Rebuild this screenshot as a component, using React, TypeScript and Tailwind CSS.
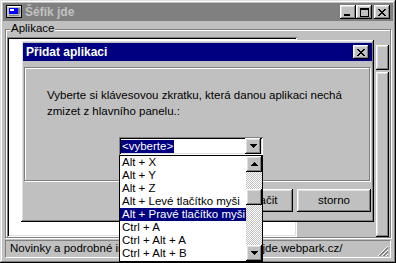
const raised =
  'bg-[#c0c0c0] shadow-[inset_-1px_-1px_0_#000,inset_1px_1px_0_#fff,inset_-2px_-2px_0_#808080,inset_2px_2px_0_#dfdfdf]'
const sunken =
  'shadow-[inset_1px_1px_0_#808080,inset_-1px_-1px_0_#fff,inset_2px_2px_0_#000,inset_-2px_-2px_0_#dfdfdf]'
const checker =
  'bg-[image:repeating-conic-gradient(#fff_0%_25%,#c0c0c0_0%_50%)] bg-[length:2px_2px]'

function Down() {
  return (
    <svg width="7" height="4" viewBox="0 0 7 4">
      <path d="M0 0h7v1H0zM1 1h5v1H1zM2 2h3v1H2zM3 3h1v1H3z" fill="#000" />
    </svg>
  )
}

function Up() {
  return (
    <svg width="7" height="4" viewBox="0 0 7 4">
      <path d="M3 0h1v1H3zM2 1h3v1H2zM1 2h5v1H1zM0 3h7v1H0z" fill="#000" />
    </svg>
  )
}

function CloseGlyph() {
  return (
    <svg width="8" height="7" viewBox="0 0 8 7">
      <path
        d="M0 0h2v1H0zM6 0h2v1H6zM1 1h2v1H1zM5 1h2v1H5zM2 2h4v1H2zM3 3h2v1H3zM2 4h4v1H2zM1 5h2v1H1zM5 5h2v1H5zM0 6h2v1H0zM6 6h2v1H6z"
        fill="#000"
      />
    </svg>
  )
}

function AppIcon() {
  return (
    <svg width="16" height="14" viewBox="0 0 16 14">
      <rect x="0.5" y="0.5" width="15" height="12" fill="#c0c0c0" stroke="#000" />
      <rect x="1" y="1" width="14" height="1" fill="#fff" />
      <rect x="3" y="3" width="9" height="6" fill="#0000ff" />
      <rect x="4" y="4" width="4" height="2" fill="#fff" />
      <rect x="12" y="3" width="2" height="6" fill="#808080" />
      <rect x="3" y="10" width="10" height="1" fill="#808080" />
    </svg>
  )
}

const items = [
  'Alt + X',
  'Alt + Y',
  'Alt + Z',
  'Alt + Levé tlačítko myši',
  'Alt + Pravé tlačítko myši',
  'Ctrl + A',
  'Ctrl + Alt + A',
  'Ctrl + Alt + B',
]

export default function App() {
  return (
    <div className="relative h-[263px] w-[396px] overflow-hidden bg-[#c0c0c0] p-[3px] font-['Liberation_Sans',Arial,sans-serif] text-[11.5px] text-black shadow-[inset_-1px_-1px_0_#000,inset_1px_1px_0_#dfdfdf,inset_-2px_-2px_0_#808080,inset_2px_2px_0_#fff]">
      {/* main window title */}
      <div className="flex h-[18px] items-center bg-[#808080] pl-[3px] pr-[3px]">
        <AppIcon />
        <span className="ml-[3px] text-[12px] font-bold text-[#c0c0c0]">Šéfík jde</span>
        <div className="ml-auto flex">
          <div className={`${raised} flex h-[14px] w-[16px] items-end justify-center pb-[3px]`}>
            <div className="ml-[-2px] h-[2px] w-[6px] bg-black" />
          </div>
          <div className={`${raised} flex h-[14px] w-[16px] items-center justify-center`}>
            <div className="h-[9px] w-[9px] border border-t-2 border-black" />
          </div>
          <div className={`${raised} ml-[2px] flex h-[14px] w-[16px] items-center justify-center`}>
            <CloseGlyph />
          </div>
        </div>
      </div>

      {/* group box Aplikace */}
      <div className="relative mx-[2px] mt-[8px] flex h-[209px] border border-[#808080] shadow-[inset_1px_1px_0_#fff,1px_1px_0_#fff]">
        <span className="absolute left-[4px] top-[-8px] bg-[#c0c0c0] px-[1px] leading-[13px]">Aplikace</span>
        <div className={`${sunken} ml-[1px] mt-[7px] h-[200px] w-[290px] bg-white`} />
        <div className="flex-1" />
        <div className="mr-[1px] mt-[15px] flex w-[13px] flex-col gap-[2px]">
          <div className={`${raised} h-[25px]`} />
          <div className={`${raised} h-[165px]`} />
        </div>
      </div>

      {/* status bar */}
      <div className="mx-[2px] mt-[2px] flex h-[18px] items-center border border-b-white border-l-[#808080] border-r-white border-t-[#808080] pl-[4px]">
        <span className="whitespace-nowrap">Novinky a podrobné informace – http://www.sefik-jde.webpark.cz/</span>
        <svg width="12" height="12" viewBox="0 0 12 12" className="ml-auto mr-[1px] mt-[4px] shrink-0">
          <path d="M11 1L1 11M11 5L5 11M11 9L9 11" stroke="#fff" />
          <path d="M11 2L2 11M11 3L3 11M11 6L6 11M11 7L7 11M11 10L10 11" stroke="#808080" />
        </svg>
      </div>

      {/* dialog Přidat aplikaci */}
      <div
        className={`${raised} absolute left-[21px] top-[40px] flex h-[182px] w-[353px] flex-col px-[2px] pt-[3px]`}
      >
        <div className="flex h-[18px] items-center bg-[#000080] pl-[3px] pr-[3px]">
          <span className="text-[12px] font-bold text-white">Přidat aplikaci</span>
          <div className={`${raised} ml-auto flex h-[14px] w-[16px] items-center justify-center`}>
            <CloseGlyph />
          </div>
        </div>
        <div className="ml-[1px] mr-[2px] mt-[6px] h-[114px] border border-[#808080] pl-[22px] pt-[19px] shadow-[inset_1px_1px_0_#fff,1px_1px_0_#fff]">
          <p className="leading-[16px]">
            Vyberte si klávesovou zkratku, která danou aplikaci nechá
            <br />
            zmizet z hlavního panelu.:
          </p>
          <div className={`${sunken} ml-[72px] mt-[18px] flex h-[18px] w-[144px] items-center bg-white p-[2px]`}>
            <span className="h-[13px] bg-[#000080] px-[1px] leading-[13px] text-white">&lt;vyberte&gt;</span>
            <div className={`${raised} ml-auto flex h-[16px] w-[16px] items-center justify-center`}>
              <Down />
            </div>
          </div>
        </div>
        <div className="mr-[1px] mt-[8px] flex justify-end gap-[4px]">
          <div className={`${raised} flex h-[23px] w-[74px] items-center justify-center`}>Vyznačit</div>
          <div className={`${raised} flex h-[23px] w-[74px] items-center justify-center`}>storno</div>
        </div>
      </div>

      {/* dropdown list */}
      <div className="absolute left-[119px] top-[155px] flex h-[107px] w-[144px] border border-black bg-white">
        <ul className="flex-1">
          {items.map((item, i) => (
            <li
              key={item}
              className={
                i === 4
                  ? 'h-[13px] whitespace-nowrap bg-[#000080] pl-[2px] leading-[13px] text-white'
                  : 'h-[13px] whitespace-nowrap pl-[2px] leading-[13px]'
              }
            >
              {item}
            </li>
          ))}
        </ul>
        <div className="flex w-[16px] flex-col">
          <div className={`${raised} flex h-[16px] items-center justify-center`}>
            <Up />
          </div>
          <div className={`${checker} h-[17px]`} />
          <div className={`${raised} h-[16px]`} />
          <div className={`${checker} flex-1`} />
          <div className={`${raised} flex h-[16px] items-center justify-center`}>
            <Down />
          </div>
        </div>
      </div>
    </div>
  )
}
